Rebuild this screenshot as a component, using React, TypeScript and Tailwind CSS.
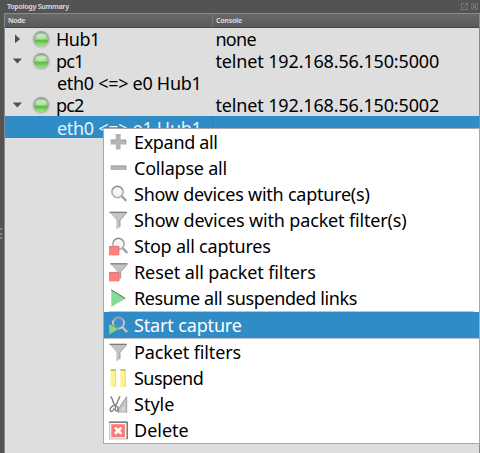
import type { ReactNode } from "react";

function Lens({ dark = false }: { dark?: boolean }) {
  return (
    <>
      <circle cx="8.5" cy="7" r="5.6" fill={dark ? "#3f8fc4" : "#f6f6f6"} stroke={dark ? "#c9c9c9" : "#b5b5b5"} strokeWidth="1.8" />
      <path d="M3.2 4.5A6.1 6.1 0 0 1 14 4.6" fill="none" stroke="#777" strokeWidth="0.8" />
      <path d="M12.6 11.3L17.2 16" stroke={dark ? "#d2d2d2" : "#a5a5a5"} strokeWidth="2.2" />
      <path d="M13.4 11.2L17.6 15.2" stroke="#777" strokeWidth="0.6" />
    </>
  );
}

function Funnel() {
  return (
    <>
      <path d="M0.5 1H17.8L11 9.2V16L7.4 18.6V9.2Z" fill="#c3c3c3" />
      <path d="M0.5 1.3H17.8" stroke="#777" strokeWidth="1.2" />
      <path d="M17.4 2L11 9.4V16" fill="none" stroke="#929292" strokeWidth="0.9" />
    </>
  );
}

const icons: Record<string, ReactNode> = {
  plus: (
    <>
      <path d="M6.8 1.6H11.6V6.8H17V11.4H11.6V16.6H6.8V11.4H1.6V6.8H6.8Z" fill="#b5b5b5" />
      <path d="M6.8 1.8H11.6M1.6 7H6.8M11.6 7H17V11.4" fill="none" stroke="#929292" strokeWidth="0.7" />
    </>
  ),
  minus: (
    <>
      <path d="M1.6 6.7H17V11H1.6Z" fill="#b5b5b5" />
      <path d="M1.6 6.9H17V11" fill="none" stroke="#8c8c8c" strokeWidth="0.7" />
    </>
  ),
  lens: <Lens />,
  funnel: <Funnel />,
  stop: (
    <>
      <g transform="translate(1 0)"><Lens /></g>
      <path d="M0 9.2H10V18.4H0Z" fill="#ff7f7f" />
      <path d="M0 9.4H10V18" fill="none" stroke="#b96565" strokeWidth="0.6" />
    </>
  ),
  reset: (
    <>
      <g transform="translate(0.7 -0.5)"><Funnel /></g>
      <path d="M0 9.2H10V18.4H0Z" fill="#ff7f7f" />
      <path d="M0 9.4H10V18" fill="none" stroke="#b96565" strokeWidth="0.6" />
    </>
  ),
  play: (
    <>
      <path d="M2.3 0.8L16.4 9.4L2.3 18Z" fill="#86d996" />
      <path d="M2.3 0.9L16.3 9.4" stroke="#50705a" strokeWidth="1" />
    </>
  ),
  start: (
    <>
      <g transform="translate(1 0)"><Lens dark /></g>
      <path d="M0.2 7.6L9.8 13L0.2 18.4Z" fill="#86d67c" />
      <path d="M0.2 7.6L9.8 13" stroke="#4c7755" strokeWidth="0.7" />
    </>
  ),
  pause: (
    <>
      <path d="M1.5 0.7H6.8V18H1.5ZM11.3 0.7H16.6V18H11.3Z" fill="#fff391" />
      <path d="M1.5 1H6.8M11.3 1H16.6" stroke="#8d8957" strokeWidth="1.1" />
      <path d="M6.6 1.5V18M16.4 1.5V18" stroke="#d4ca7b" strokeWidth="0.6" />
    </>
  ),
  style: (
    <>
      <path d="M18 1.2V17.8H8.5V14.5Z" fill="#c4c4c4" />
      <path d="M17.7 1.5V17.8" stroke="#999" strokeWidth="0.8" />
      <path d="M17.4 2L9.5 13.5V17.5" fill="none" stroke="#777" strokeWidth="0.7" />
      <path d="M1.2 2.2C3 1.4 3.4 5.4 5 8.6C6 10.4 8.8 10.8 9 13.5C9 17 6 16.7 6.2 13.5C6.4 10 10 4 11 1.2" fill="none" stroke="#858585" strokeWidth="1.5" />
      <path d="M6.3 10C3 10.6 0.8 13 1.2 15.2C1.8 17.6 4.8 16 5 13.2" fill="none" stroke="#858585" strokeWidth="1.5" />
      <path d="M12 15.6L15.6 10.8V15.6Z" fill="#dedede" />
    </>
  ),
  delete: (
    <>
      <rect x="0" y="0.6" width="18.8" height="18" rx="1.2" fill="#c8c8c8" />
      <path d="M0 1.1H18.3V18" fill="none" stroke="#6c6c6c" strokeWidth="1.1" />
      <rect x="1.3" y="2" width="15.7" height="15.2" fill="#fafafa" />
      <rect x="2.3" y="3.2" width="13.6" height="13" fill="#ff7878" />
      <path d="M6 6.6L12.3 12.8M12.3 6.6L6 12.8" stroke="#fff" strokeWidth="2.6" />
    </>
  ),
};

type Item = { icon: string; label: string; track: string; active?: boolean };

const groupOne: Item[] = [
  { icon: "plus", label: "Expand all", track: "tracking-[-0.33px]" },
  { icon: "minus", label: "Collapse all", track: "tracking-[-0.22px]" },
  { icon: "lens", label: "Show devices with capture(s)", track: "tracking-[-0.24px]" },
  { icon: "funnel", label: "Show devices with packet filter(s)", track: "tracking-[-0.16px]" },
  { icon: "stop", label: "Stop all captures", track: "tracking-[-0.22px]" },
  { icon: "reset", label: "Reset all packet filters", track: "tracking-[-0.11px]" },
  { icon: "play", label: "Resume all suspended links", track: "tracking-[-0.39px]" },
];

const groupTwo: Item[] = [
  { icon: "start", label: "Start capture", track: "tracking-[-0.15px]", active: true },
  { icon: "funnel", label: "Packet filters", track: "tracking-[-0.12px]" },
  { icon: "pause", label: "Suspend", track: "tracking-[-0.55px]" },
  { icon: "style", label: "Style", track: "tracking-[0px]" },
  { icon: "delete", label: "Delete", track: "tracking-[0px]" },
];

function MenuItem({ icon, label, track, active }: Item) {
  return (
    <div className={`flex items-center pl-[5px] ${active ? "h-[27px] border-b border-[#b9c3c9] bg-[#308cc6] text-white" : "h-[26px] text-black"}`}>
      <svg className="h-[19px] w-[19px] shrink-0" viewBox="0 0 19 19">{icons[icon]}</svg>
      <span className={`ml-[6px] whitespace-nowrap leading-[26px] ${track}`}>{label}</span>
    </div>
  );
}

function Led() {
  return (
    <svg className="h-[19px] w-[19px] shrink-0" viewBox="0 0 19 19">
      <defs>
        <linearGradient id="led" x1="0" y1="0" x2="0" y2="1">
          <stop offset="0" stopColor="#86b87a" />
          <stop offset="0.2" stopColor="#b4dcaa" />
          <stop offset="0.5" stopColor="#8fd07c" />
          <stop offset="0.58" stopColor="#5dba42" />
          <stop offset="1" stopColor="#a4ef90" />
        </linearGradient>
        <linearGradient id="ring" x1="0" y1="0" x2="0" y2="1">
          <stop offset="0" stopColor="#a2a2a2" />
          <stop offset="1" stopColor="#cfcfcf" />
        </linearGradient>
      </defs>
      <circle cx="9.2" cy="9.4" r="9.2" fill="#d0d0d0" />
      <circle cx="9.2" cy="9.4" r="8.3" fill="url(#ring)" />
      <circle cx="9.2" cy="9.4" r="7" fill="url(#led)" stroke="#7d9b76" strokeWidth="0.4" />
      <ellipse cx="9.2" cy="6.6" rx="4.8" ry="3" fill="#fff" opacity="0.3" />
    </svg>
  );
}

type Row = { name: string; nameTrack: string; console?: string; consoleTrack?: string; state?: "open" | "closed"; selected?: boolean };

const rows: Row[] = [
  { name: "Hub1", nameTrack: "tracking-[-0.5px]", console: "none", consoleTrack: "tracking-[-0.75px]", state: "closed" },
  { name: "pc1", nameTrack: "tracking-[-0.9px]", console: "telnet 192.168.56.150:5000", consoleTrack: "tracking-[-0.15px]", state: "open" },
  { name: "eth0 <=> e0 Hub1", nameTrack: "tracking-[-0.3px]" },
  { name: "pc2", nameTrack: "tracking-[-0.9px]", console: "telnet 192.168.56.150:5002", consoleTrack: "tracking-[-0.15px]", state: "open" },
  { name: "eth0 <=> e1 Hub1", nameTrack: "tracking-[-0.3px]", selected: true },
];

function TreeRow({ name, nameTrack, console: target, consoleTrack = "", state, selected }: Row) {
  return (
    <div className={`flex h-[22px] items-center whitespace-nowrap leading-[22px] ${selected ? "bg-[#308cc6] text-[#e6f2fa]" : "text-black"}`}>
      <div className={`flex h-full w-[208px] shrink-0 items-center ${selected ? "border-r border-[#2a7fb5]" : ""}`}>
        {state ? (
          <>
            <svg className="ml-[7px] h-3 w-[11px] shrink-0" viewBox="0 0 11 12">
              <path d={state === "open" ? "M0.8 3.6H10L5.4 8.6Z" : "M3 1.5V10.3L8.2 5.9Z"} fill="#505050" />
            </svg>
            <div className="ml-[9px] flex"><Led /></div>
            <span className={`ml-[5px] ${nameTrack}`}>{name}</span>
          </>
        ) : (
          <span className={`ml-[52px] ${selected ? "pt-[1px]" : ""} ${nameTrack}`}>{name}</span>
        )}
      </div>
      <span className={`ml-[2.5px] ${consoleTrack}`}>{target}</span>
    </div>
  );
}

export default function App() {
  return (
    <div className="relative flex h-[453px] w-[480px] flex-col overflow-hidden bg-[#535353] font-['Noto_Sans',sans-serif] text-[18px]">
      <div className="flex h-[13px] shrink-0 items-center justify-between pl-[7px] pr-[2px] text-[#d2d2d2]">
        <span className="text-[7px] font-bold leading-[13px] tracking-[-0.31px]">Topology Summary</span>
        <svg className="h-[7px] w-[17px]" viewBox="0 0 17 7">
          <path d="M3 .5H.5V6.5H6.5V4M4 .5H6.5V3M6.5 .5L2.5 4.5" fill="none" stroke="#888" strokeWidth="0.7" />
          <rect x="10.5" y="0.5" width="6" height="6" fill="none" stroke="#777" strokeWidth="0.7" />
          <path d="M11.5 1.5L15.5 5.5M15.5 1.5L11.5 5.5" stroke="#999" strokeWidth="0.9" />
        </svg>
      </div>
      <div className="flex min-h-0 flex-1">
        <div className="flex w-[4px] shrink-0 items-center pt-[1px]">
          <div className="h-[11px] w-[2px] border-l-2 border-dotted border-[#858585]" />
        </div>
        <div className="flex-1 border-l border-r border-t border-[#8a8a8a] bg-[#dedede]">
          <div className="flex h-[14px] border-b border-[#484848] bg-linear-to-b from-[#686868] to-[#5a5a5a] text-[7px] font-bold leading-[14px] text-[#d8d8d8]">
            <div className="w-[208px] border-r border-[#757575] pl-[3px] tracking-[-0.4px]">Node</div>
            <div className="pl-[3px] tracking-[-0.25px]">Console</div>
          </div>
          {rows.map((row) => <TreeRow key={row.name} {...row} />)}
        </div>
      </div>
      <div className="absolute left-[103px] top-[128px] h-[316px] w-[377px] border border-[#a9a9a9] bg-white">
        {groupOne.map((item) => <MenuItem key={item.label} {...item} />)}
        <div className="ml-[5px] mr-[5px] h-px bg-[#c4c4c4]" />
        {groupTwo.map((item) => <MenuItem key={item.label} {...item} />)}
      </div>
    </div>
  );
}
